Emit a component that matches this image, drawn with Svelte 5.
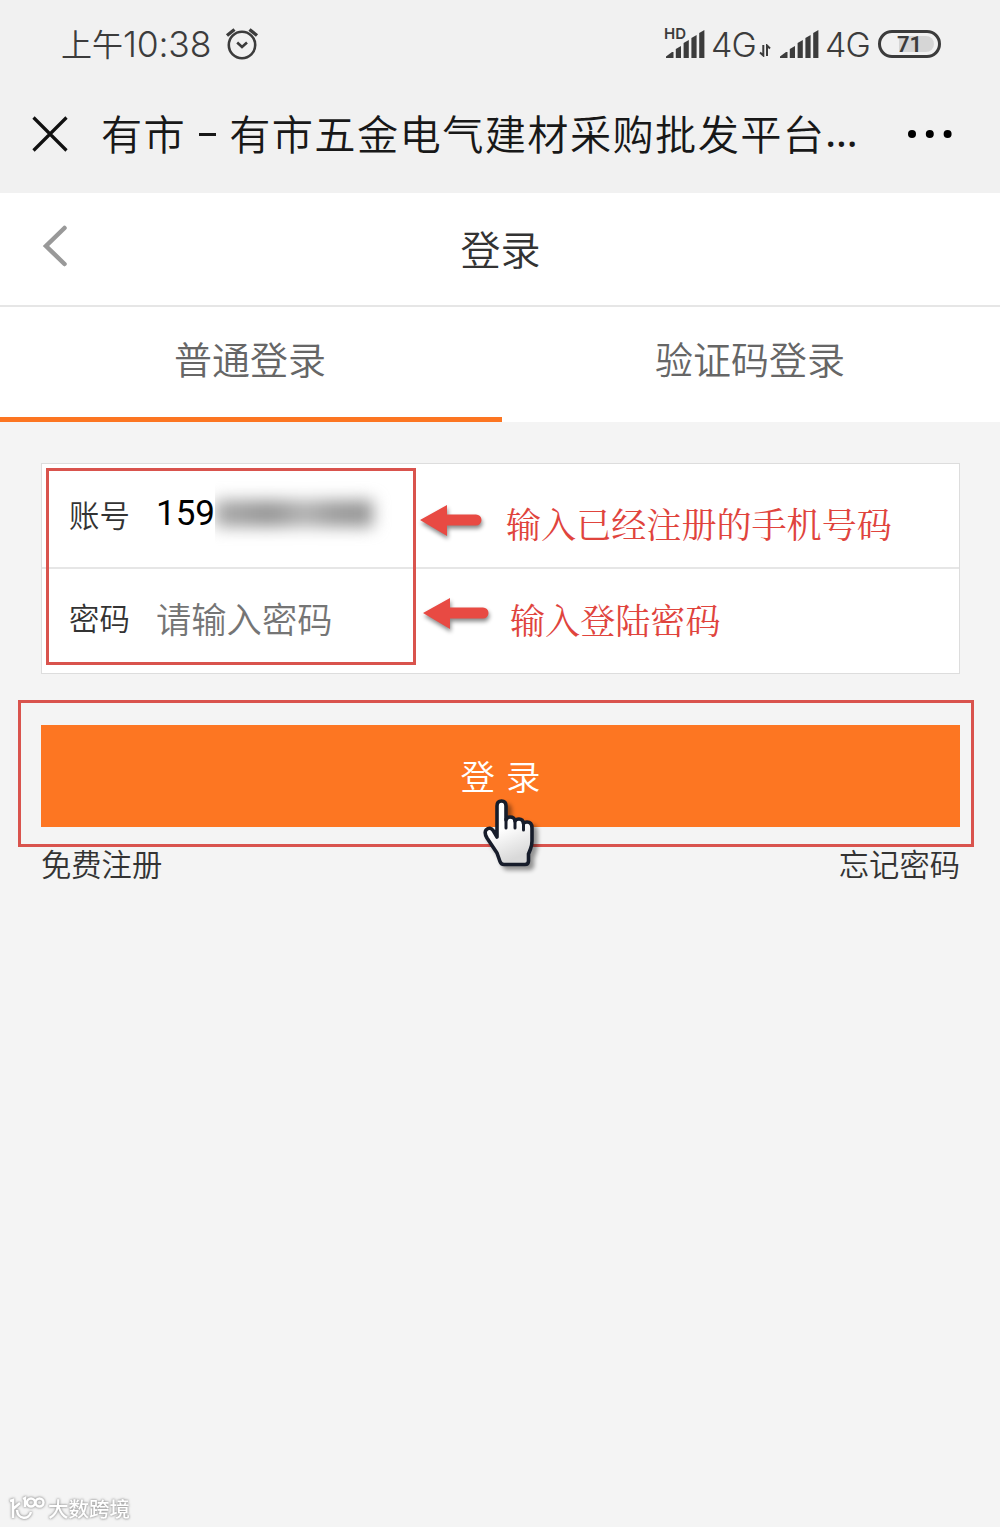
<script lang="ts">
  const tabs = ["普通登录", "验证码登录"];
  const bars = [5, 11, 17, 22, 27];

  let active = $state(0);
</script>

{#snippet signal()}
  {#each bars as h, i}
    {#if i === 0}
      <path d="M0 28v-1.500l6-4.500h1.500v6z" />
    {:else}
      <path d="M{i * 7.8 + 2} 28V{30 - h}l5.200-3V28z" />
    {/if}
  {/each}
{/snippet}

{#snippet arrow(length: number)}
  <svg class="arrow" width={length + 8} height="36" viewBox="0 0 {length + 8} 36">
    <path d="M0 15L27 0V9.500H{length - 5}a5.300 5.300 0 0 1 0 11H27V31z" />
  </svg>
{/snippet}

<div class="screen">
  <div class="status">
    <span class="clock">上午<span class="digits">10:38</span></span>
    <svg class="alarm" width="34" height="34" viewBox="0 0 34 34">
      <circle cx="17" cy="18" r="13.200" />
      <path d="M12.200 15.500l4.800 4.500 5-4.500" />
      <path class="bells" d="M2 8.500L9.500 2.500M24.500 2.500L32 8.500" />
    </svg>
    <span class="space"></span>
    <span class="sim">
      <svg width="40" height="28" viewBox="0 0 40 28">{@render signal()}</svg>
      <span class="hd">HD</span>
    </span>
    <span class="net">4G</span>
    <svg class="data" width="12" height="13" viewBox="0 0 12 13">
      <path d="M4.300 1v10.500L1 8.500M8 12V1.500L11 4.500" />
    </svg>
    <svg width="40" height="28" viewBox="0 0 40 28">{@render signal()}</svg>
    <span class="net">4G</span>
    <span class="battery"><span class="charge"></span><b>71</b></span>
  </div>

  <div class="titlebar">
    <svg class="close" width="36" height="36" viewBox="0 0 36 36"><path d="M1.500 1.500l33 33M34.500 1.500l-33 33" /></svg>
    <span class="page-title"><span>有市</span><i></i><span>有市五金电气建材采购批发平台</span><em>...</em></span>
    <svg class="more" width="44" height="8" viewBox="0 0 44 8">
      <circle cx="4" cy="4" r="4" /><circle cx="21.800" cy="4" r="4" /><circle cx="39.600" cy="4" r="4" />
    </svg>
  </div>

  <header>
    <svg class="back" width="26" height="42" viewBox="0 0 26 42"><path d="M22.500 3L4 21l18.500 18" /></svg>
    <h1>登录</h1>
  </header>

  <nav>
    {#each tabs as tab, i}
      <button class="tab" class:active={active === i} onclick={() => (active = i)}>{tab}</button>
    {/each}
  </nav>

  <main>
    <div class="fields">
      <div class="row">
        <span class="label">账号</span>
        <span class="phone">159</span>
        <span class="masked"><span class="smudge"></span></span>
      </div>
      <div class="row">
        <span class="label">密码</span>
        <span class="placeholder">请输入密码</span>
      </div>
      <div class="outline"></div>
      <div class="note note-phone">{@render arrow(61)}<span>输入已经注册的手机号码</span></div>
      <div class="note note-password">{@render arrow(65)}<span>输入登陆密码</span></div>
    </div>

    <div class="submit-wrap">
      <button class="submit"><span>登</span><span>录</span></button>
      <div class="submit-outline"></div>
      <svg class="hand" width="52" height="70" viewBox="0 0 52 70">
        <defs>
          <linearGradient id="skin" x1="0" y1="0" x2="0.300" y2="1">
            <stop offset="0.500" stop-color="#fff" />
            <stop offset="1" stop-color="#d9d9d9" />
          </linearGradient>
        </defs>
        <path d="M13 38V7q0-5 4.500-5t4.500 5v14q1-3 4-3 4.500 0 5 4 1-2 4-2 4 0 4.500 4.500 1-1.500 3.500-1.500 5 0 5 6v13q0 4-1.500 8l-2 5v7q0 3.500-3.500 3.500H20q-3 0-4-3L13 54 3 39q-3-5-1-8 4-4 7.500 1z" />
        <path class="fingers" d="M22 20v9M31 22v7M39.500 25v6" />
      </svg>
    </div>

    <div class="links">
      <span>免费注册</span>
      <span>忘记密码</span>
    </div>
  </main>

  <div class="watermark">
    <svg width="37" height="26" viewBox="0 0 37 26">
      <path d="M2 5l3-1v18M5 13l7-6M9 14c1 10 12 10 14 2M15 3l2-1v9" />
      <circle cx="23" cy="6.500" r="4" /><circle cx="31.500" cy="6.500" r="4" />
    </svg>
    <span>大数跨境</span>
  </div>
</div>

<style>
  :global(body) { margin: 0; }
  .screen {
    position: relative;
    width: 1000px;
    height: 1527px;
    overflow: hidden;
    background: #f4f4f4;
    color: #333;
    font-family: "Noto Sans CJK SC", sans-serif;
    font-weight: 350;
  }
  svg { display: block; flex: none; }
  button { border: 0; padding: 0; font: inherit; }

  .status {
    display: flex;
    align-items: center;
    box-sizing: border-box;
    height: 90px;
    padding: 0 59px 2px 61px;
    background: #f1f1f1;
    color: #3c3c3c;
    fill: #3c3c3c;
  }
  .clock {
    display: flex;
    align-items: center;
    width: 151px;
    margin-top: -2px;
    font-size: 31px;
    line-height: 40px;
    white-space: nowrap;
  }
  .digits {
    margin-top: 3px;
    font-family: Inter, sans-serif;
    font-size: 35.5px;
    font-weight: 350;
    letter-spacing: -0.2px;
  }
  .alarm { margin-left: 13px; }
  .alarm, .data { fill: none; stroke: #3c3c3c; stroke-width: 2.6; }
  .bells { stroke-width: 3.4; }
  .space { flex: 1; }
  .sim { position: relative; margin-right: -2px; }
  .hd {
    position: absolute;
    left: -2px;
    top: -3px;
    font: 600 15px/13px Inter, sans-serif;
  }
  .net {
    width: 45px;
    margin-left: 7px;
    font: 300 34px/40px Inter, sans-serif;
    letter-spacing: -1px;
  }
  .sim + .net { margin-top: 2px; }
  .data { align-self: flex-end; margin: 0 9px 31px 3px; stroke-width: 2; }
  .data + svg + .net { width: 46px; margin-left: 5px; margin-top: 2px; }
  .battery {
    position: relative;
    box-sizing: border-box;
    width: 63px;
    height: 28px;
    margin-left: 7px;
    border: 3px solid #3c3c3c;
    border-radius: 14px;
    text-align: center;
    font: 600 22px/23px Roboto, sans-serif;
  }
  .battery b { position: relative; font-weight: 600; }
  .charge {
    position: absolute;
    inset: 3px 4px 3px 18px;
    border-radius: 2px 9px 9px 2px;
    background: #d6d6d6;
  }

  .titlebar {
    display: flex;
    align-items: center;
    box-sizing: border-box;
    height: 103px;
    padding: 0 48px 16px 32px;
    background: #f1f1f1;
    color: #181818;
  }
  .close { fill: none; stroke: #111; stroke-width: 3.2; }
  .page-title {
    display: flex;
    align-items: center;
    flex: 1;
    margin: -3px 0 0 33px;
    font-size: 41.2px;
    line-height: 60px;
    letter-spacing: 1.4px;
    white-space: nowrap;
  }
  .page-title i { width: 17px; height: 3px; margin: 4px 13px 0; background: #181818; }
  .page-title em {
    font-style: normal;
    font-family: "Noto Sans", sans-serif;
    font-size: 38px;
    font-weight: 500;
    letter-spacing: 0.5px;
  }

  header {
    display: flex;
    align-items: center;
    box-sizing: border-box;
    height: 114px;
    padding: 0 42px;
    background: #fff;
    border-bottom: 2px solid #e6e6e6;
  }
  .back { margin-bottom: 7px; fill: none; stroke: #999; stroke-width: 4.5; stroke-linecap: round; }
  h1 {
    flex: 1;
    margin: -3px 25px 0 0;
    text-align: center;
    font-size: 40px;
    font-weight: 350;
  }

  nav { display: flex; height: 115px; background: #fff; }
  .tab {
    width: 498px;
    padding: 0 2px 9px 0;
    border-bottom: 5px solid transparent;
    background: none;
    color: #666;
    font-size: 38px;
  }
  .tab.active { width: 502px; border-color: #fc7521; }

  main { padding: 41px 40px 0 41px; }
  .fields {
    position: relative;
    border: 1px solid #ddd;
    background: #fff;
  }
  .row {
    display: flex;
    align-items: center;
    box-sizing: border-box;
    height: 103px;
    padding: 0 0 4px 27px;
  }
  .row + .row { height: 106px; border-top: 2px solid #e6e6e6; padding-bottom: 8px; }
  .label { width: 87px; font-size: 30.4px; }
  .phone { color: #000; font: 400 35px/50px Roboto, sans-serif; }
  .masked { width: 185px; height: 72px; overflow: hidden; }
  .smudge {
    display: block;
    width: 158px;
    height: 27px;
    margin-top: 22px;
    background: linear-gradient(90deg, #aaa, #959595 35%, #b3b3b3 57%, #9c9c9c 75%, #959595);
    filter: blur(8px);
  }
  .placeholder { color: #757575; font-size: 35.3px; }
  .outline {
    position: absolute;
    left: 4px;
    top: 4px;
    width: 364px;
    height: 191px;
    border: 3px solid #d9534d;
  }
  .note {
    position: absolute;
    display: flex;
    align-items: center;
    color: #e0443d;
    font-family: "Noto Serif CJK SC", "Noto Sans CJK SC", serif;
    font-size: 35.1px;
    font-weight: 400;
    line-height: 44px;
    white-space: nowrap;
  }
  .note-phone { left: 378px; top: 37px; }
  .note-password { left: 381px; top: 133px; }
  .note span { margin-left: 17px; }
  .note-password span { margin-left: 14px; }
  .arrow { fill: #e84a43; filter: drop-shadow(1px 3px 2px #0007); }
  .note-password .arrow { margin-top: -7px; }

  .submit-wrap { position: relative; margin-top: 51px; }
  .submit {
    display: flex;
    justify-content: center;
    align-items: center;
    gap: 11px;
    box-sizing: border-box;
    width: 100%;
    height: 102px;
    padding: 0 0 3px;
    background: #fd7622;
    color: #fff;
    font-size: 34.5px;
  }
  .submit-outline {
    position: absolute;
    inset: -25px -14px -20px -23px;
    border: 3px solid #d9534d;
  }
  .hand {
    position: absolute;
    left: 443px;
    top: 74px;
    overflow: visible;
    fill: url(#skin);
    stroke: #171d2b;
    stroke-width: 3.6;
    stroke-linejoin: round;
    filter: drop-shadow(4px 4px 2px #0006);
  }
  .fingers { fill: none; stroke-width: 3; stroke-linecap: round; }
  .links {
    display: flex;
    justify-content: space-between;
    margin-top: 13px;
    font-size: 30.3px;
    line-height: 46px;
  }
  .watermark {
    position: absolute;
    left: 8px;
    bottom: 5px;
    display: flex;
    align-items: flex-end;
    gap: 3px;
    color: #fff;
    font-size: 20.5px;
    font-weight: 500;
    line-height: 27px;
    filter: drop-shadow(0 0 1px #999) drop-shadow(0 0 1px #bbb);
  }
  .watermark svg { fill: none; stroke: #fff; stroke-width: 2.5; }
</style>
